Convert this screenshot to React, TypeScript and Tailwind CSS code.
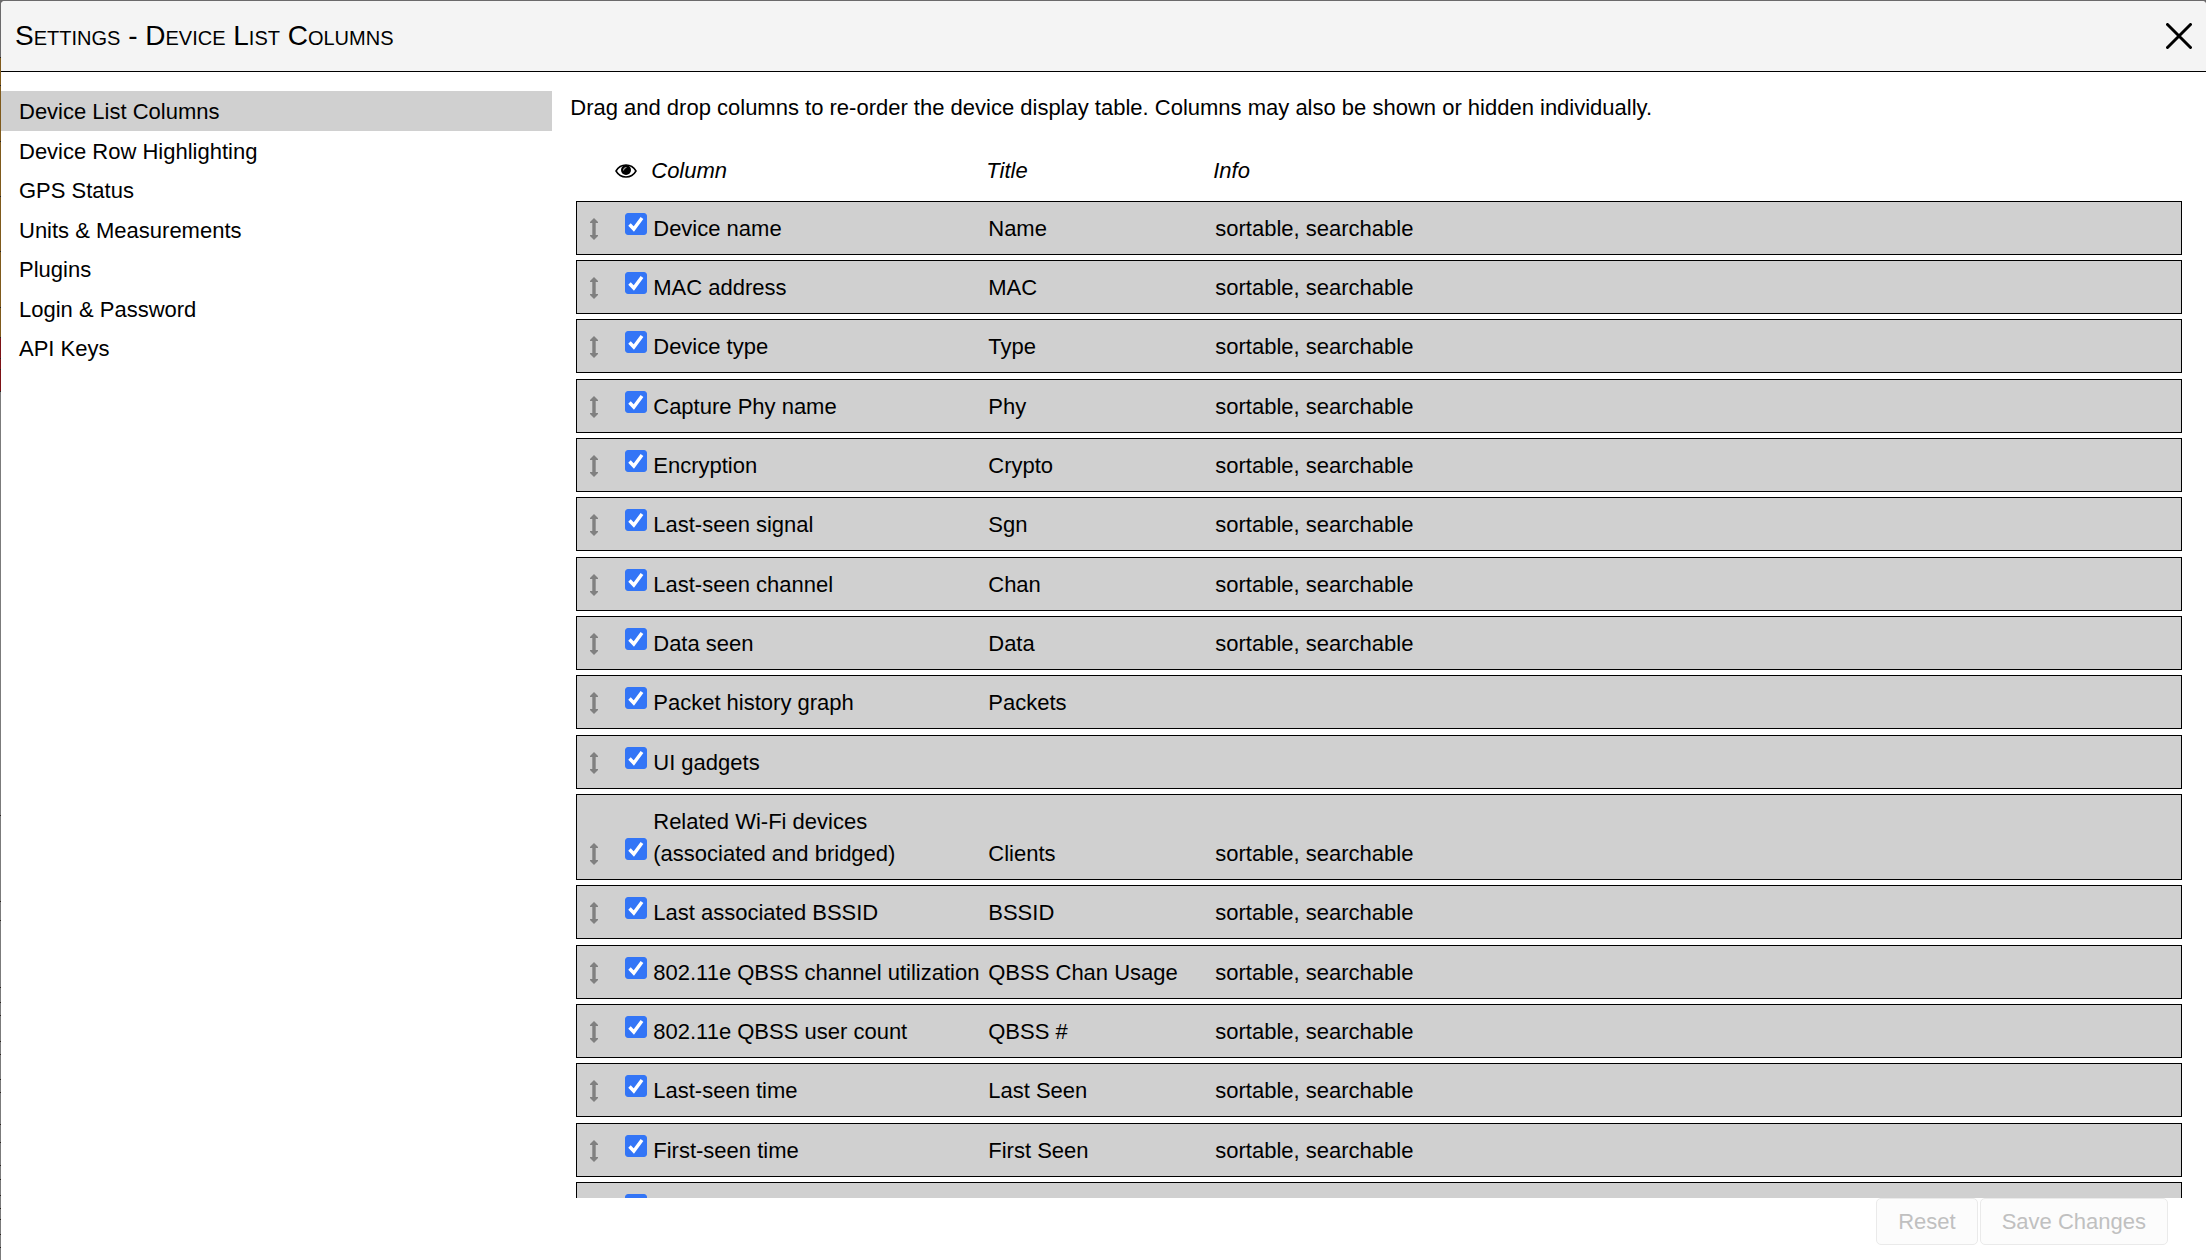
import { useState } from "react";

const SECTIONS = [
  "Device List Columns",
  "Device Row Highlighting",
  "GPS Status",
  "Units & Measurements",
  "Plugins",
  "Login & Password",
  "API Keys",
];

type Column = { name: string; title: string; info: string };

const SORT = "sortable, searchable";

const COLUMNS: Column[] = [
  { name: "Device name", title: "Name", info: SORT },
  { name: "MAC address", title: "MAC", info: SORT },
  { name: "Device type", title: "Type", info: SORT },
  { name: "Capture Phy name", title: "Phy", info: SORT },
  { name: "Encryption", title: "Crypto", info: SORT },
  { name: "Last-seen signal", title: "Sgn", info: SORT },
  { name: "Last-seen channel", title: "Chan", info: SORT },
  { name: "Data seen", title: "Data", info: SORT },
  { name: "Packet history graph", title: "Packets", info: "" },
  { name: "UI gadgets", title: "", info: "" },
  { name: "Related Wi-Fi devices (associated and bridged)", title: "Clients", info: SORT },
  { name: "Last associated BSSID", title: "BSSID", info: SORT },
  { name: "802.11e QBSS channel utilization", title: "QBSS Chan Usage", info: SORT },
  { name: "802.11e QBSS user count", title: "QBSS #", info: SORT },
  { name: "Last-seen time", title: "Last Seen", info: SORT },
  { name: "First-seen time", title: "First Seen", info: SORT },
  { name: "", title: "", info: "" },
];

// Heights of the device rows that show past the dialog's left edge, one dark rule under each.
const EDGE_ROWS = [
  { color: "bg-[#6b6a6b]", heights: [57] },
  { color: "bg-[#7f5a1c]", heights: [27, 55, 54, 54, 55, 29] },
  { color: "bg-[#7d1216]", heights: [20, 10, 21] },
  { color: "bg-[#7b7b7b]", heights: [423, 85, 18, 66, 14, 12, 25, 12, 24, 12, 31, 17, 22, 13, 15, 12, 10, 14, 12] },
];

function BackdropEdge() {
  return (
    <div className="flex w-px shrink-0 flex-col overflow-hidden bg-[#7b7b7b]" aria-hidden="true">
      {EDGE_ROWS.map((group) =>
        group.heights.map((height, i) => (
          <div
            key={`${group.color}-${i}`}
            className={`shrink-0 border-b border-[#2a2420] box-content ${group.color}`}
            style={{ height }}
          />
        )),
      )}
    </div>
  );
}

function DragHandle() {
  return (
    <svg viewBox="0 0 8 22" className="h-[22px] w-2 fill-[#808080]" aria-hidden="true">
      <path d="M4 0 8 4V5H5.700V17H8V18L4 22 0 18V17H2.300V5H0V4Z" />
    </svg>
  );
}

function EyeIcon() {
  return (
    <svg viewBox="0 0 22 14" className="h-[14px] w-[22px]" role="img" aria-label="Visible">
      <path
        d="M1 7C3.2 3.2 6.800 1 11 1S18.800 3.200 21 7C18.800 10.800 15.200 13 11 13S3.200 10.800 1 7Z"
        fill="none"
        stroke="black"
        strokeWidth="1.500"
      />
      <circle cx="11" cy="6" r="5" />
      <path d="M8.500 6A2.500 2.500 0 0 1 11 3.500" fill="none" stroke="white" strokeWidth="0.800" strokeLinecap="round" />
    </svg>
  );
}

function Tick({ id, label, checked, onChange }: { id: string; label: string; checked: boolean; onChange: () => void }) {
  return (
    <span className="grid size-[22px]">
      <input
        id={id}
        type="checkbox"
        aria-label={label || "Column"}
        checked={checked}
        onChange={onChange}
        className="col-start-1 row-start-1 size-[22px] appearance-none rounded-[3px] border border-[#808080] bg-white checked:border-[#3375f6] checked:bg-[#3375f6]"
      />
      {checked && (
        <svg viewBox="0 0 22 22" className="pointer-events-none col-start-1 row-start-1" aria-hidden="true">
          <path d="M4.500 11.500 8.800 16 17 5" fill="none" stroke="white" strokeWidth="3.400" />
        </svg>
      )}
    </span>
  );
}

export default function App() {
  const [active, setActive] = useState(SECTIONS[0]);
  const [shown, setShown] = useState(COLUMNS.map(() => true));
  const toggle = (i: number) => setShown(shown.map((v, n) => (n === i ? !v : v)));

  return (
    <div className="flex h-screen overflow-hidden bg-[#6b6a6b] font-['Liberation_Sans',Arial,sans-serif] text-[22px] leading-8 text-black">
      <BackdropEdge />
      <div className="mt-px flex min-w-0 flex-1 flex-col overflow-hidden rounded-t-[4px] bg-white">
        <header className="flex h-[71px] shrink-0 items-center justify-between border-b border-black bg-[#f4f4f4] pr-[14px] pl-[14px]">
          <h1 className="text-[28px] [font-variant:small-caps]">Settings - Device List Columns</h1>
          <button type="button" aria-label="Close">
            <svg viewBox="0 0 26 26" className="size-[26px]" aria-hidden="true">
              <path d="M1.500 1.500 24.500 24.500M24.500 1.500 1.500 24.500" stroke="black" strokeWidth="3" strokeLinecap="round" />
            </svg>
          </button>
        </header>

        <div className="flex min-h-0 flex-1">
          <nav className="flex w-1/4 flex-col pt-[19px]">
            {SECTIONS.map((s) => (
              <button
                key={s}
                type="button"
                onClick={() => setActive(s)}
                className={`h-10 shrink-0 pt-[2px] pl-[18px] text-left even:h-[39px] ${s === active ? "bg-[#d0d0d0]" : ""}`}
              >
                {s}
              </button>
            ))}
          </nav>

          <main className="flex min-w-0 flex-1 flex-col pl-[18px]">
            <div className="min-h-0 flex-1 overflow-hidden pt-5">
              <p>Drag and drop columns to re-order the device display table. Columns may also be shown or hidden individually.</p>
              <table className="mt-[31px] mr-6 ml-[6px] block">
                <thead className="block">
                  <tr className="mb-[14px] flex items-center italic">
                    <th className="flex w-[75px] justify-end pr-[14px]"><EyeIcon /></th>
                    <th className="w-[335px] text-left font-normal">Column</th>
                    <th className="w-[227px] text-left font-normal">Title</th>
                    <th className="text-left font-normal">Info</th>
                  </tr>
                </thead>
                <tbody className="block">
                  {COLUMNS.map((c, i) => (
                    <tr
                      key={i}
                      className="mb-[5px] flex min-h-[54px] items-end border border-black bg-[#d0d0d0] pt-[11px] pb-[9px] nth-[3n]:mb-[6px]"
                    >
                      <td className="flex h-8 w-12 items-center pl-[13px]"><DragHandle /></td>
                      <td className="h-8 w-7">
                        <Tick id={`column-${i}`} label={c.name} checked={shown[i]} onChange={() => toggle(i)} />
                      </td>
                      <td className="w-[335px] pr-2">
                        <label htmlFor={`column-${i}`} className="block">{c.name}</label>
                      </td>
                      <td className="w-[227px]">{c.title}</td>
                      <td>{c.info}</td>
                    </tr>
                  ))}
                </tbody>
              </table>
            </div>
            <footer className="flex h-[62px] shrink-0 items-start justify-end gap-[2px] pr-[38px]">
              <button type="button" disabled className="h-[47px] rounded-[5px] border border-[#eaeaea] bg-[#fcfcfc] px-[21px] text-[#c0c0c0]">Reset</button>
              <button type="button" disabled className="h-[47px] rounded-[5px] border border-[#eaeaea] bg-[#fcfcfc] px-[21px] text-[#c0c0c0]">Save Changes</button>
            </footer>
          </main>
        </div>
      </div>
    </div>
  );
}
